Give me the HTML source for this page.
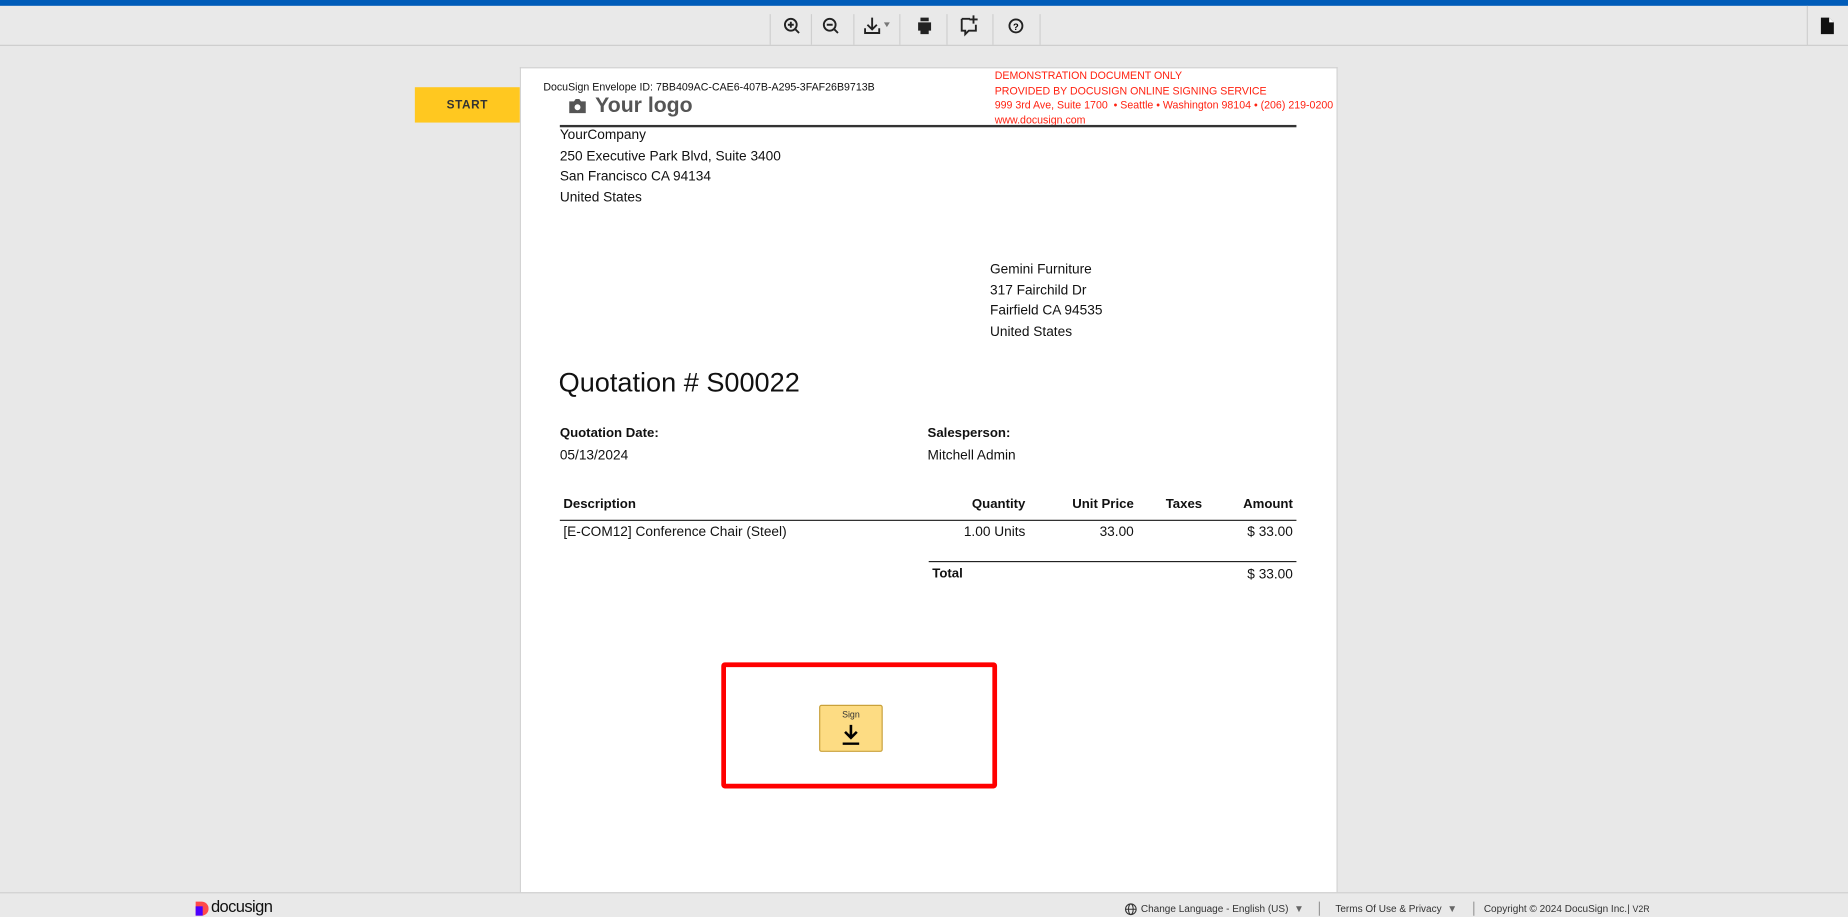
<!DOCTYPE html>
<html><head><meta charset="utf-8">
<style>
html,body{margin:0;padding:0;width:1848px;height:916px;overflow:hidden;background:#e8e8e8}
#w{position:absolute;left:0;top:0;width:1568px;height:777px;transform:scale(1.17857);transform-origin:0 0;font-family:"Liberation Sans",sans-serif;background:#e8e8e8}
.a{position:absolute;white-space:nowrap}
.t{font-size:11.6px;color:#111;line-height:17.5px}
.b{font-weight:bold;font-size:11.2px}
.sep{position:absolute;top:12px;width:1px;height:26px;background:#cfcfcf}
.red{color:#f21;font-size:9px;line-height:12.5px}
.hr{position:absolute;height:1px;background:#222}
</style></head><body><div id="w">
<div class="a" style="left:0;top:0;width:1568px;height:5px;background:#005cb9"></div>
<div class="a" style="left:0;top:5px;width:1568px;height:33px;background:#e9e9e9;border-bottom:1px solid #cdcdcd"></div>
<div class="sep" style="left:653px"></div><div class="sep" style="left:688px"></div><div class="sep" style="left:724px"></div><div class="sep" style="left:763px"></div><div class="sep" style="left:803px"></div><div class="sep" style="left:842px"></div><div class="sep" style="left:882px"></div>
<div class="a" style="left:1533px;top:5px;width:1px;height:34px;background:#cfcfcf"></div>
<svg class="a" style="left:0;top:0" width="1568" height="40">
<g fill="none" stroke="#222" stroke-width="1.6">
<circle cx="671" cy="21" r="5"/><line x1="675" y1="25" x2="678" y2="28"/><line x1="668.5" y1="21" x2="673.5" y2="21"/><line x1="671" y1="18.5" x2="671" y2="23.5"/>
<circle cx="704" cy="21" r="5"/><line x1="708" y1="25" x2="711" y2="28"/><line x1="701.5" y1="21" x2="706.5" y2="21"/>
<path d="M740 15v10M736 21l4 4 4-4M734 24v4h12v-4"/>
<circle cx="862" cy="22" r="5.5"/>
</g>
<path d="M750 19h5l-2.5 4z" fill="#777"/>
<path d="M779 19h11v7h-2v3h-7v-3h-2z M781 15h7v3h-7z" fill="#222"/>
<path d="M816 16h7M816 16v10h3v3l3-3h6v-5" fill="none" stroke="#222" stroke-width="1.6"/><path d="M826 13v7M822.5 16.5h7" stroke="#222" stroke-width="1.6"/>
<text x="859.5" y="25.5" font-size="8" font-weight="bold" font-family="Liberation Sans">?</text>
<path d="M1545 15h7l4 4v10h-11z" fill="#111"/><path d="M1552 15v4h4" fill="#fff"/>
</svg>
<div class="a" style="left:441px;top:57px;width:692px;height:700px;background:#fff;border:1px solid #d0d0d0;border-bottom:none"></div>
<div class="a" style="left:352px;top:74px;width:89px;height:30px;background:#ffc820;font-size:10px;font-weight:bold;color:#333;text-align:center;line-height:32px;letter-spacing:.5px">START</div>
<div class="a" style="left:461px;top:69px;font-size:9px;color:#111">DocuSign Envelope ID: 7BB409AC-CAE6-407B-A295-3FAF26B9713B</div>
<div class="a red" style="left:844px;top:58px">DEMONSTRATION DOCUMENT ONLY<br>PROVIDED BY DOCUSIGN ONLINE SIGNING SERVICE<br>999 3rd Ave, Suite 1700 &nbsp;• Seattle • Washington 98104 • (206) 219-0200<br>www.docusign.com</div>
<svg class="a" style="left:482px;top:83px" width="16" height="14"><path d="M1 3h4l1.5-2h3l1.5 2h4v10H1z" fill="#555"/><circle cx="8" cy="8" r="2.5" fill="#fff"/></svg>
<div class="a" style="left:505px;top:79px;font-size:18px;font-weight:bold;color:#555">Your logo</div>
<div class="hr" style="left:475px;top:106px;width:625px;height:1.5px;background:#333"></div>
<div class="a t" style="left:475px;top:106px">YourCompany<br>250 Executive Park Blvd, Suite 3400<br>San Francisco CA 94134<br>United States</div>
<div class="a t" style="left:840px;top:220px">Gemini Furniture<br>317 Fairchild Dr<br>Fairfield CA 94535<br>United States</div>
<div class="a" style="left:474px;top:311px;font-size:23px;color:#111">Quotation # S00022</div>
<div class="a t" style="left:475px;top:359px"><span class="b">Quotation Date:</span><br>05/13/2024</div>
<div class="a t" style="left:787px;top:359px"><span class="b">Salesperson:</span><br>Mitchell Admin</div>
<div class="a t b" style="left:478px;top:420px">Description</div>
<div class="a t b" style="right:698px;top:420px">Quantity</div>
<div class="a t b" style="right:606px;top:420px">Unit Price</div>
<div class="a t b" style="right:548px;top:420px">Taxes</div>
<div class="a t b" style="right:471px;top:420px">Amount</div>
<div class="hr" style="left:475px;top:441px;width:625px"></div>
<div class="a t" style="left:478px;top:443px">[E-COM12] Conference Chair (Steel)</div>
<div class="a t" style="right:698px;top:443px">1.00 Units</div>
<div class="a t" style="right:606px;top:443px">33.00</div>
<div class="a t" style="right:471px;top:443px">$ 33.00</div>
<div class="hr" style="left:788px;top:476px;width:312px"></div>
<div class="a t b" style="left:791px;top:479px">Total</div>
<div class="a t" style="right:471px;top:479px">$ 33.00</div>
<div class="a" style="left:612px;top:562px;width:226px;height:99px;border:4px solid #f00;border-radius:3px"></div>
<div class="a" style="left:695px;top:598px;width:52px;height:38px;background:#fddc83;border:1px solid #c9a13a;border-radius:2px"></div>
<div class="a" style="left:695px;top:602px;width:54px;text-align:center;font-size:7.5px;color:#333">Sign</div>
<svg class="a" style="left:713px;top:614px" width="18" height="20"><path d="M9 1v11M4 7l5 5 5-5" fill="none" stroke="#000" stroke-width="2.2"/><rect x="2" y="16" width="14" height="2" fill="#000"/></svg>
<div class="a" style="left:0;top:757px;width:1568px;height:20px;background:#e9e9e9;border-top:1px solid #cfcfcf"></div>
<svg class="a" style="left:165px;top:764px" width="12" height="13"><path d="M1 1h5a6 6 0 0 1 0 12H1z" fill="#ff4a4a"/><rect x="1" y="5" width="6" height="8" fill="#4c00ff"/></svg>
<div class="a" style="left:179px;top:761px;font-size:14px;color:#111;letter-spacing:-.5px">docusign</div>
<svg class="a" style="left:954px;top:766px" width="11" height="11"><g fill="none" stroke="#333" stroke-width=".9"><circle cx="5.5" cy="5.5" r="4.5"/><ellipse cx="5.5" cy="5.5" rx="2" ry="4.5"/><path d="M1 5.5h9"/></g></svg>
<div class="a" style="left:968px;top:766px;font-size:8.5px;color:#333">Change Language - English (US) &nbsp;<span style="color:#666">▼</span></div>
<div class="a" style="left:1119px;top:765px;width:1px;height:12px;background:#999"></div>
<div class="a" style="left:1133px;top:766px;font-size:8.5px;color:#333">Terms Of Use &amp; Privacy &nbsp;<span style="color:#666">▼</span></div>
<div class="a" style="left:1250px;top:765px;width:1px;height:12px;background:#999"></div>
<div class="a" style="left:1259px;top:766px;font-size:8.5px;color:#333">Copyright © 2024 DocuSign Inc.| <span style="font-size:7.5px">V2R</span></div>
</div></body></html>
